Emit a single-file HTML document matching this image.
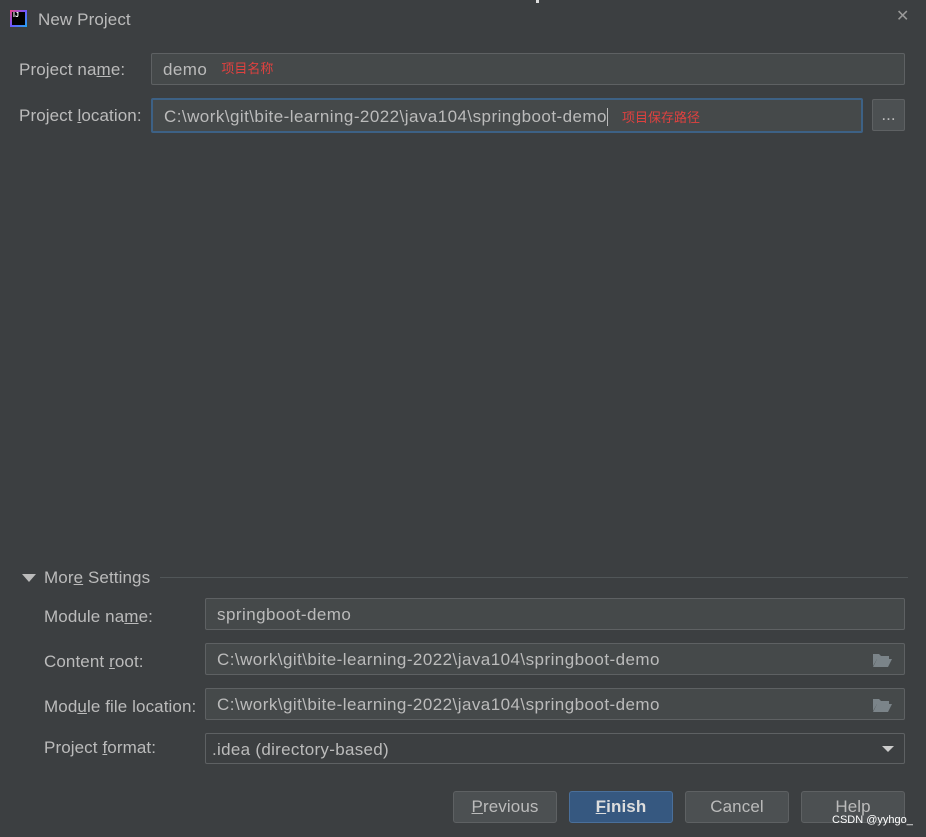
<!DOCTYPE html>
<html><head><meta charset="utf-8"><style>
*{box-sizing:border-box;margin:0;padding:0}
body{width:926px;height:837px;background:#3c3f41;font-family:"Liberation Sans","Noto Sans CJK SC",sans-serif;color:#bbbbbb;position:relative;overflow:hidden;font-size:17px;letter-spacing:0.1px}
.a{position:absolute;white-space:nowrap}
.f{position:absolute;background:#45494a;border:1px solid #5e6163;border-radius:2px;padding-left:11px;padding-top:2px;display:flex;align-items:center;font-size:17px;letter-spacing:0.45px;color:#bbb;white-space:nowrap}
.red{color:#e0413f;font-size:13px;margin-left:14px;letter-spacing:0;margin-top:-6px}
.b{position:absolute;top:791px;height:32px;width:104px;border:1px solid #5e6163;border-radius:3px;background:#4c5052;display:flex;align-items:center;justify-content:center;font-size:17px}
u{text-decoration:underline}
.fold{position:absolute;right:12px;top:9px}
</style></head><body>
<div class="a" style="left:10px;top:10px;width:17px;height:17px;background:linear-gradient(135deg,#f0467e,#6b57ff,#1fa7ef);padding:2px"><div style="width:13px;height:13px;background:#000;color:#fff;font-size:7px;font-weight:bold;line-height:8px;padding-left:1px">IJ</div></div>
<div class="a" style="left:38px;top:10px">New Project</div>
<div class="a" style="left:896px;top:6px;font-size:16px;color:#999">✕</div>
<div class="a" style="left:536px;top:0;width:3px;height:3px;background:#ddd"></div>

<div class="a" style="left:19px;top:60px">Project na<u>m</u>e:</div>
<div class="f" style="left:151px;top:53px;width:754px;height:32px">demo<span class="red">项目名称</span></div>
<div class="a" style="left:19px;top:106px">Project <u>l</u>ocation:</div>
<div class="f" style="left:151px;top:98px;width:712px;height:35px;border:2px solid #3d6185">C:\work\git\bite-learning-2022\java104\springboot-demo<span style="display:inline-block;width:1px;height:18px;background:#bbb"></span><span class="red" style="margin-top:0">项目保存路径</span></div>
<div class="f" style="left:872px;top:99px;width:33px;height:32px;padding:0;justify-content:center;background:#4c5052;letter-spacing:0">...</div>

<div class="a" style="left:22px;top:574px;width:0;height:0;border-left:7px solid transparent;border-right:7px solid transparent;border-top:8px solid #bbb"></div>
<div class="a" style="left:44px;top:568px">Mor<u>e</u> Settings</div>
<div class="a" style="left:160px;top:577px;width:748px;height:1px;background:#515658"></div>

<div class="a" style="left:44px;top:607px">Module na<u>m</u>e:</div>
<div class="f" style="left:205px;top:598px;width:700px;height:32px">springboot-demo</div>
<div class="a" style="left:44px;top:652px">Content <u>r</u>oot:</div>
<div class="f" style="left:205px;top:643px;width:700px;height:32px">C:\work\git\bite-learning-2022\java104\springboot-demo
<svg class="fold" width="19" height="14" viewBox="0 0 19 14"><path d="M0 1h6l2 2h8v3H4L0 13z" fill="#7b8489"/><path d="M4 6h15l-4 8H0z" fill="#7b8489"/></svg></div>
<div class="a" style="left:44px;top:697px">Mod<u>u</u>le file location:</div>
<div class="f" style="left:205px;top:688px;width:700px;height:32px">C:\work\git\bite-learning-2022\java104\springboot-demo
<svg class="fold" width="19" height="14" viewBox="0 0 19 14"><path d="M0 1h6l2 2h8v3H4L0 13z" fill="#7b8489"/><path d="M4 6h15l-4 8H0z" fill="#7b8489"/></svg></div>
<div class="a" style="left:44px;top:738px">Project <u>f</u>ormat:</div>
<div class="f" style="left:205px;top:733px;width:700px;height:31px;padding-left:6px;background:#3c3f41;border-color:#5e6163;letter-spacing:0.3px">.idea (directory-based)
<div style="position:absolute;right:10px;top:12px;border-left:6px solid transparent;border-right:6px solid transparent;border-top:6px solid #ccc"></div></div>

<div class="b" style="left:453px"><u>P</u>revious</div>
<div class="b" style="left:569px;background:#365880;border-color:#4a6f9a;color:#ddd;font-weight:bold"><u>F</u>inish</div>
<div class="b" style="left:685px">Cancel</div>
<div class="b" style="left:801px">Help</div>
<div class="a" style="left:832px;top:814px;font-size:11px;color:#fff;letter-spacing:0">CSDN @yyhgo_</div>
</body></html>
